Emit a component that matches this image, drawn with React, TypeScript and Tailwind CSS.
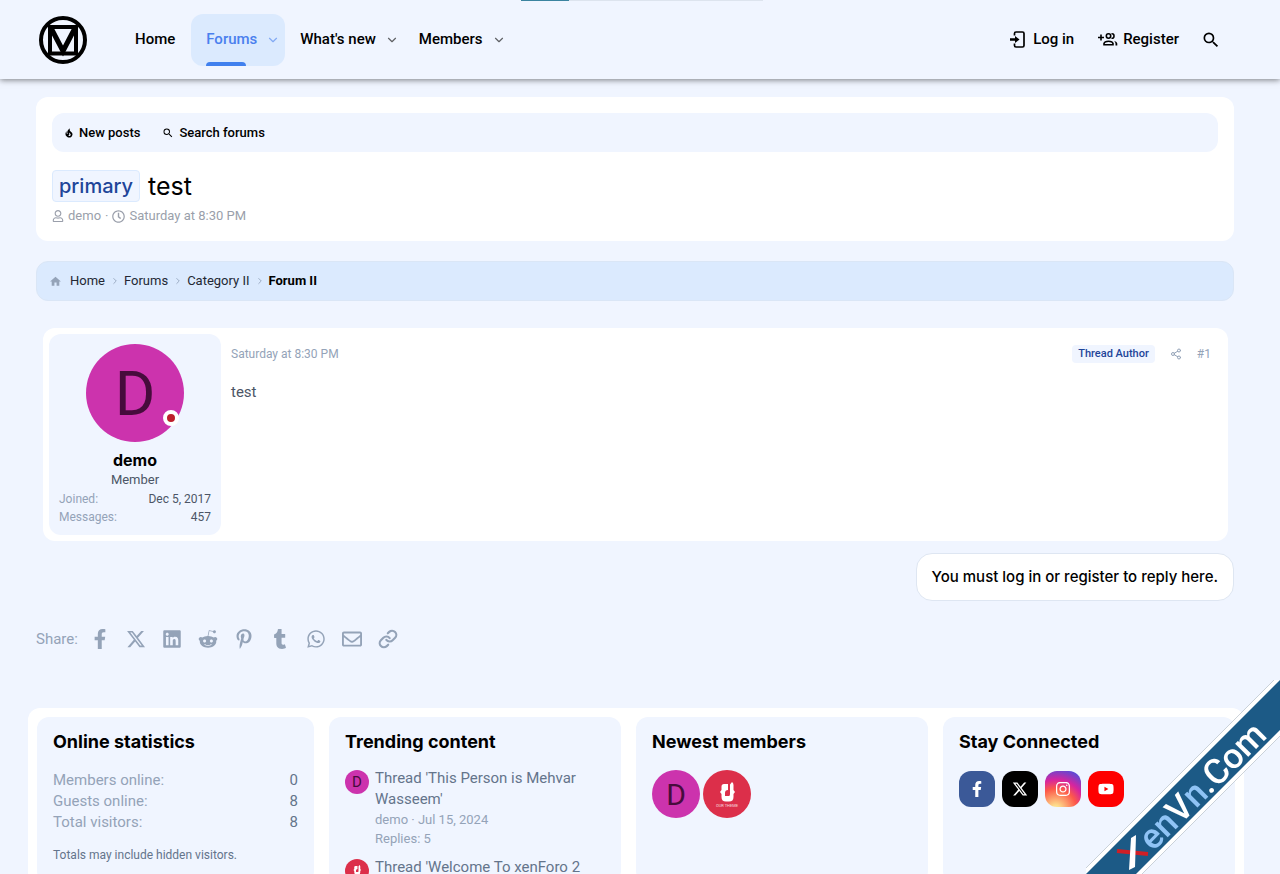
import React from "react";
import { FaFacebookF, FaRegClock, FaRegUser, FaLinkedin, FaRedditAlien, FaPinterestP, FaTumblr, FaWhatsapp, FaRegEnvelope, FaInstagram, FaYoutube } from "react-icons/fa";
import { FaXTwitter } from "react-icons/fa6";
import { MdHome, MdSearch } from "react-icons/md";
import { ChevronDown, ChevronRight, Link, Share2 } from "lucide-react";

const LinkIcon = ({ className }: { className?: string }) => <Link className={className} strokeWidth={2.6} />;

const navItems = [
  { label: "Home", menu: false, active: false },
  { label: "Forums", menu: true, active: true },
  { label: "What's new", menu: true, active: false },
  { label: "Members", menu: true, active: false },
];

const shareLinks = [
  { label: "Facebook", icon: FaFacebookF },
  { label: "X", icon: FaXTwitter },
  { label: "LinkedIn", icon: FaLinkedin },
  { label: "Reddit", icon: FaRedditAlien },
  { label: "Pinterest", icon: FaPinterestP },
  { label: "Tumblr", icon: FaTumblr },
  { label: "WhatsApp", icon: FaWhatsapp },
  { label: "Email", icon: FaRegEnvelope },
  { label: "Link", icon: LinkIcon },
];

const socials = [
  { label: "Facebook", icon: FaFacebookF, bg: "bg-[#3b5998]" },
  { label: "X", icon: FaXTwitter, bg: "bg-black" },
  {
    label: "Instagram",
    icon: FaInstagram,
    bg: "bg-[radial-gradient(circle_at_30%_107%,#fdf497_0%,#fdd98a_10%,#fd5949_45%,#d6249f_65%,#285aeb_100%)]",
  },
  { label: "YouTube", icon: FaYoutube, bg: "bg-[#fe0000]" },
];

const stats = [
  { label: "Members online:", value: "0" },
  { label: "Guests online:", value: "8" },
  { label: "Total visitors:", value: "8" },
];

const Logo = () => (
  <svg viewBox="0 0 48 48" className="size-12" fill="none" stroke="#000">
    <circle cx="24" cy="24" r="22" strokeWidth="4" />
    <path d="M11 11H37V37.500H11Z" strokeWidth="4" />
    <path d="M12 12L24 35L36 12" strokeWidth="5" />
  </svg>
);

const LoginIcon = () => (
  <svg viewBox="0 0 16 18" className="h-[18px] w-4" fill="none" stroke="#000" strokeWidth="1.700">
    <path d="M4.500 4.500V2.500Q4.500 1 6 1H12.500Q14 1 14 2.500V14.500Q14 16 12.500 16H6Q4.500 16 4.500 14.500V12.500" />
    <path d="M0 8.500H6" strokeWidth="2.500" />
    <path d="M5 5L9.500 8.500L5 12Z" fill="#000" stroke="none" />
  </svg>
);

const RegisterIcon = () => (
  <svg viewBox="0 0 20 18" className="h-[18px] w-5" fill="none" stroke="#000" strokeWidth="1.600">
    <path d="M0 6.500H6M3 3.500V9.500" />
    <circle cx="10.500" cy="5" r="2.200" />
    <path d="M13.500 2.700Q16 2.500 16 5T13.500 7.300" />
    <path d="M6 13.700V12.500Q6.500 10.200 10.500 10.200T15 12.500V13.700Z" />
    <path d="M16 9.800Q19.300 10.800 19.300 12.500V14.500H17.500V12.500Q17.300 10.800 16 9.800Z" fill="#000" stroke="none" />
  </svg>
);

const FireIcon = () => (
  <svg viewBox="0 0 24 24" className="size-3" fill="currentColor">
    <path d="M17.66 11.2C17.43 10.9 17.15 10.64 16.89 10.38C16.22 9.78 15.46 9.35 14.82 8.72C13.33 7.26 13 4.85 13.95 3C13 3.23 12.17 3.75 11.46 4.32C8.87 6.4 7.85 10.07 9.07 13.22C9.11 13.32 9.15 13.42 9.15 13.55C9.15 13.77 9 13.97 8.8 14.05C8.57 14.15 8.33 14.09 8.14 13.93C8.08 13.88 8.04 13.83 8 13.76C6.87 12.33 6.69 10.28 7.45 8.64C5.78 10 4.87 12.3 5 14.47C5.06 14.97 5.12 15.47 5.29 15.97C5.43 16.57 5.7 17.17 6 17.7C7.08 19.43 8.95 20.67 10.96 20.92C13.1 21.19 15.39 20.8 17.03 19.32C18.86 17.66 19.5 15 18.56 12.72L18.43 12.46C18.22 12 17.66 11.2 17.66 11.2M14.5 17.5C14.22 17.74 13.76 18 13.4 18.1C12.28 18.5 11.16 17.94 10.5 17.28C11.69 17 12.4 16.12 12.61 15.23C12.78 14.43 12.46 13.77 12.33 13C12.21 12.26 12.23 11.63 12.5 10.94C12.69 11.32 12.89 11.7 13.13 12C13.9 13 15.11 13.44 15.37 14.8C15.41 14.94 15.43 15.08 15.43 15.23C15.46 16.05 15.1 16.95 14.5 17.5Z" />
  </svg>
);

// red avatar with the white chair-like mark, the caption only fits the large one
const BrandAvatar = ({ className, caption }: { className: string; caption?: string }) => (
  <svg viewBox="0 0 48 48" className={className}>
    <circle cx="24" cy="24" r="24" fill="#dc2f4a" />
    <path
      d="M18.500 16.500Q18.500 14 21 14H25V20Q22 20 22 23V26H26Q27 26 27 24V14.500L29 12Q30.500 13 30.500 15V20L32 22L30.500 24V27Q30.500 31.500 26 31.500H23Q18.500 31.500 18.500 27V24L17 22L18.500 20Z"
      fill="#fff"
    />
    {caption && (
      <text x="24" y="37" textAnchor="middle" fontSize="4" fill="#fff" opacity="0.8" fontFamily="Roboto, sans-serif">
        {caption}
      </text>
    )}
  </svg>
);

const FooterBlock = ({ title, children }: { title: string; children: React.ReactNode }) => (
  <section className="rounded-xl bg-[#f0f5ff] px-4 pt-[13px]">
    <h3 className="[font-family:Inter,sans-serif] text-[18px] leading-6 font-bold text-black">{title}</h3>
    {children}
  </section>
);

const Ribbon = () => (
  <svg viewBox="0 0 194 194" className="pointer-events-none fixed right-0 bottom-0 size-[194px]">
    <path d="M-6 194L194 -6V56L56 194Z" fill="#fff" />
    <path d="M-6 194L194 -6" stroke="#9ba6b3" strokeWidth="0.500" />
    <path d="M56 194L194 56" stroke="#9ba6b3" strokeWidth="0.500" />
    <path d="M0 194L194 0V50L50 194Z" fill="#1c5a86" />
    <path d="M31 171L62 174" stroke="#cf1f26" strokeWidth="4" />
    <path d="M45 158L50 155L49 187L43 190Z" fill="#fff" />
    <text
      transform="translate(67 172) rotate(-45)"
      fontFamily="Roboto, sans-serif"
      fontSize="35"
      fontWeight="500"
      fill="#fff"
    >
      <tspan fill="#8fc3f5">en</tspan>V<tspan fill="#8fc3f5">n</tspan>.Com
    </text>
  </svg>
);

const App = () => {
  return (
    <div className="flex min-h-screen flex-col bg-[#f0f5ff] [font-family:Roboto,sans-serif]">
      <header className="relative flex h-[79px] items-center pr-[59px] pl-[39px] shadow-[0_1px_6px_rgba(0,0,0,0.5)]">
        <div className="absolute top-0 left-[521px] flex h-px w-[242px] bg-[#dde4ee]">
          <div className="w-[48px] bg-[#3b84a0]" />
        </div>
        <a href="#" aria-label="Board index">
          <Logo />
        </a>
        <nav className="ml-[33px] flex items-center text-[15px] font-medium text-black">
          {navItems.map((item) => (
            <a
              key={item.label}
              href="#"
              className={
                item.active
                  ? "relative flex h-[52px] items-center gap-[10px] rounded-xl bg-blue-100 pr-[6px] pl-[15px] text-[#4a80ee]"
                  : item.menu
                    ? "flex h-[52px] items-center gap-[10px] pr-[6px] pl-[15px]"
                    : "flex h-[52px] items-center pr-4 pl-[15px]"
              }
            >
              {item.label}
              {item.menu && <ChevronDown className="size-[14px] -mx-px opacity-60" />}
              {item.active && <span className="absolute bottom-0 left-[15px] h-1 w-10 rounded-t bg-[#4080ee]" />}
            </a>
          ))}
        </nav>
        <div className="ml-auto flex items-center text-[15px] font-medium text-black">
          <a href="#" className="flex items-center gap-[7px]">
            <LoginIcon />
            Log in
          </a>
          <a href="#" className="ml-6 flex items-center gap-[5px]">
            <RegisterIcon />
            Register
          </a>
          <button type="button" aria-label="Search" className="ml-[22px]">
            <MdSearch className="size-5" />
          </button>
        </div>
      </header>

      <main className="flex flex-1 flex-col pt-[18px] pr-[46px] pl-9">
        <section className="rounded-xl bg-white px-4 pt-4 pb-[15px]">
          <div className="flex h-[39px] items-center gap-[22px] rounded-xl bg-[#f0f5ff] px-[11px] text-[13px] font-medium text-black">
            <a href="#" className="flex items-center gap-1">
              <FireIcon />
              New posts
            </a>
            <a href="#" className="flex items-center gap-[5px]">
              <MdSearch className="size-3" />
              Search forums
            </a>
          </div>
          <h1 className="mt-[18px] flex items-center gap-2 [font-family:Inter,sans-serif] text-[25px] leading-8 text-black">
            <span className="rounded border border-blue-100 bg-[#f0f5ff] px-[6px] text-xl leading-[30px] font-medium text-[#1e4599]">
              primary
            </span>
            test
          </h1>
          <div className="mt-1 flex items-center gap-1 text-[13px] leading-5 text-[#9a9fab]">
            <FaRegUser className="size-3" />
            <a href="#">demo</a>
            <span>·</span>
            <FaRegClock className="size-[13px]" />
            <time>Saturday at 8:30 PM</time>
          </div>
        </section>

        <nav className="mt-5 flex h-10 items-center rounded-xl border border-[#dae6f6] bg-blue-100 pl-3 text-[13px] text-[#232833]">
          <MdHome className="mr-2 size-[13px] text-[#94a3b8]" />
          <a href="#">Home</a>
          <ChevronRight className="mr-1 ml-[5px] size-[10px] text-slate-400" />
          <a href="#">Forums</a>
          <ChevronRight className="mr-1 ml-[5px] size-[10px] text-slate-400" />
          <a href="#">Category II</a>
          <ChevronRight className="mr-1 ml-[5px] size-[10px] text-slate-400" />
          <a href="#" className="font-bold text-black">
            Forum II
          </a>
        </nav>

        <article className="mt-[27px] mr-[6px] ml-[7px] flex rounded-xl bg-white p-[6px]">
          <div className="flex h-[201px] w-[172px] flex-col items-center rounded-xl bg-[#f0f5ff] px-[10px] pt-[10px]">
            <div className="relative flex size-[98px] items-center justify-center rounded-full bg-[#cc33ad] text-[62px] text-[#460c3c]">
              D
              <span className="absolute right-[5px] bottom-4 size-4 rounded-full border-4 border-white bg-[#bd1e2b]" />
            </div>
            <a href="#" className="mt-2 [font-family:Inter,sans-serif] text-[16px] leading-5 font-bold text-black">
              demo
            </a>
            <span className="text-[13px] leading-5 text-[#4c5566]">Member</span>
            <dl className="grid w-full grid-cols-2 text-[12px] leading-[18px] text-[#4c5566]">
              <dt className="text-[#94a3b8]">Joined:</dt>
              <dd className="text-right whitespace-nowrap">Dec 5, 2017</dd>
              <dt className="text-[#94a3b8]">Messages:</dt>
              <dd className="text-right">457</dd>
            </dl>
          </div>
          <div className="flex-1 pt-[10px] pr-[11px] pl-[10px]">
            <div className="flex items-center text-[12px] leading-5 text-[#94a3b8]">
              <time className="mr-auto">Saturday at 8:30 PM</time>
              <span className="rounded bg-[#f0f5ff] px-[6px] text-[11px] leading-[18px] font-medium text-[#1e4599]">
                Thread Author
              </span>
              <button type="button" aria-label="Share" className="mr-[15px] ml-[15px]">
                <Share2 className="size-3" />
              </button>
              <a href="#">#1</a>
            </div>
            <p className="mt-4 text-[15px] leading-6 text-[#4c5566]">test</p>
          </div>
        </article>

        <a
          href="#"
          className="mt-3 flex h-12 items-center self-end rounded-2xl border border-[#dee6f2] bg-white px-[15px] [font-family:Inter,sans-serif] text-[15px] font-medium text-black"
        >
          You must log in or register to reply here.
        </a>

        <div className="mt-[26px] flex h-6 items-center text-[15px] text-[#94a3b8]">
          <span className="mr-3">Share:</span>
          <div className="flex gap-4">
            {shareLinks.map(({ label, icon: Icon }) => (
              <a key={label} href="#" aria-label={label}>
                <Icon className="size-5" />
              </a>
            ))}
          </div>
        </div>

        <footer className="-mr-[10px] -ml-2 mt-[57px] grid flex-1 grid-cols-[277px_1fr_1fr_1fr] gap-[15px] rounded-t-xl bg-white px-[9px] pt-[9px]">
          <FooterBlock title="Online statistics">
            <dl className="mt-4 grid grid-cols-[1fr_auto] text-[15px] leading-[21px] text-[#94a3b8]">
              {stats.map((stat) => (
                <React.Fragment key={stat.label}>
                  <dt>{stat.label}</dt>
                  <dd className="text-[#64748b]">{stat.value}</dd>
                </React.Fragment>
              ))}
            </dl>
            <p className="mt-3 text-[12px] leading-5 text-[#64748b]">Totals may include hidden visitors.</p>
          </FooterBlock>
          <FooterBlock title="Trending content">
            <ul className="mt-[14px] flex flex-col gap-[9px]">
              <li className="flex gap-[6px]">
                <span className="mt-[2px] flex size-6 shrink-0 items-center justify-center rounded-full bg-[#cc33ad] text-[15px] text-[#460c3c]">
                  D
                </span>
                <div className="text-[13px] leading-[19px] text-[#94a3b8]">
                  <a href="#" className="block text-[15px] leading-[21px] text-[#64748b]">
                    Thread 'This Person is Mehvar Wasseem'
                  </a>
                  <div>demo · Jul 15, 2024</div>
                  <div>Replies: 5</div>
                </div>
              </li>
              <li className="flex gap-[6px]">
                <BrandAvatar className="mt-[2px] size-6 shrink-0" />
                <a href="#" className="text-[15px] leading-[21px] text-[#64748b]">
                  Thread 'Welcome To xenForo 2
                </a>
              </li>
            </ul>
          </FooterBlock>
          <FooterBlock title="Newest members">
            <div className="mt-4 flex gap-[3px]">
              <span className="flex size-12 items-center justify-center rounded-full bg-[#cc33ad] text-[30px] text-[#460c3c]">
                D
              </span>
              <BrandAvatar className="size-12" caption="OUR THEME" />
            </div>
          </FooterBlock>
          <FooterBlock title="Stay Connected">
            <div className="mt-[17px] flex gap-[7px]">
              {socials.map(({ label, icon: Icon, bg }) => (
                <a
                  key={label}
                  href="#"
                  aria-label={label}
                  className={`flex size-9 items-center justify-center rounded-xl text-white ${bg}`}
                >
                  <Icon className="size-4" />
                </a>
              ))}
            </div>
          </FooterBlock>
        </footer>
      </main>
      <Ribbon />
    </div>
  );
};

export default App;
